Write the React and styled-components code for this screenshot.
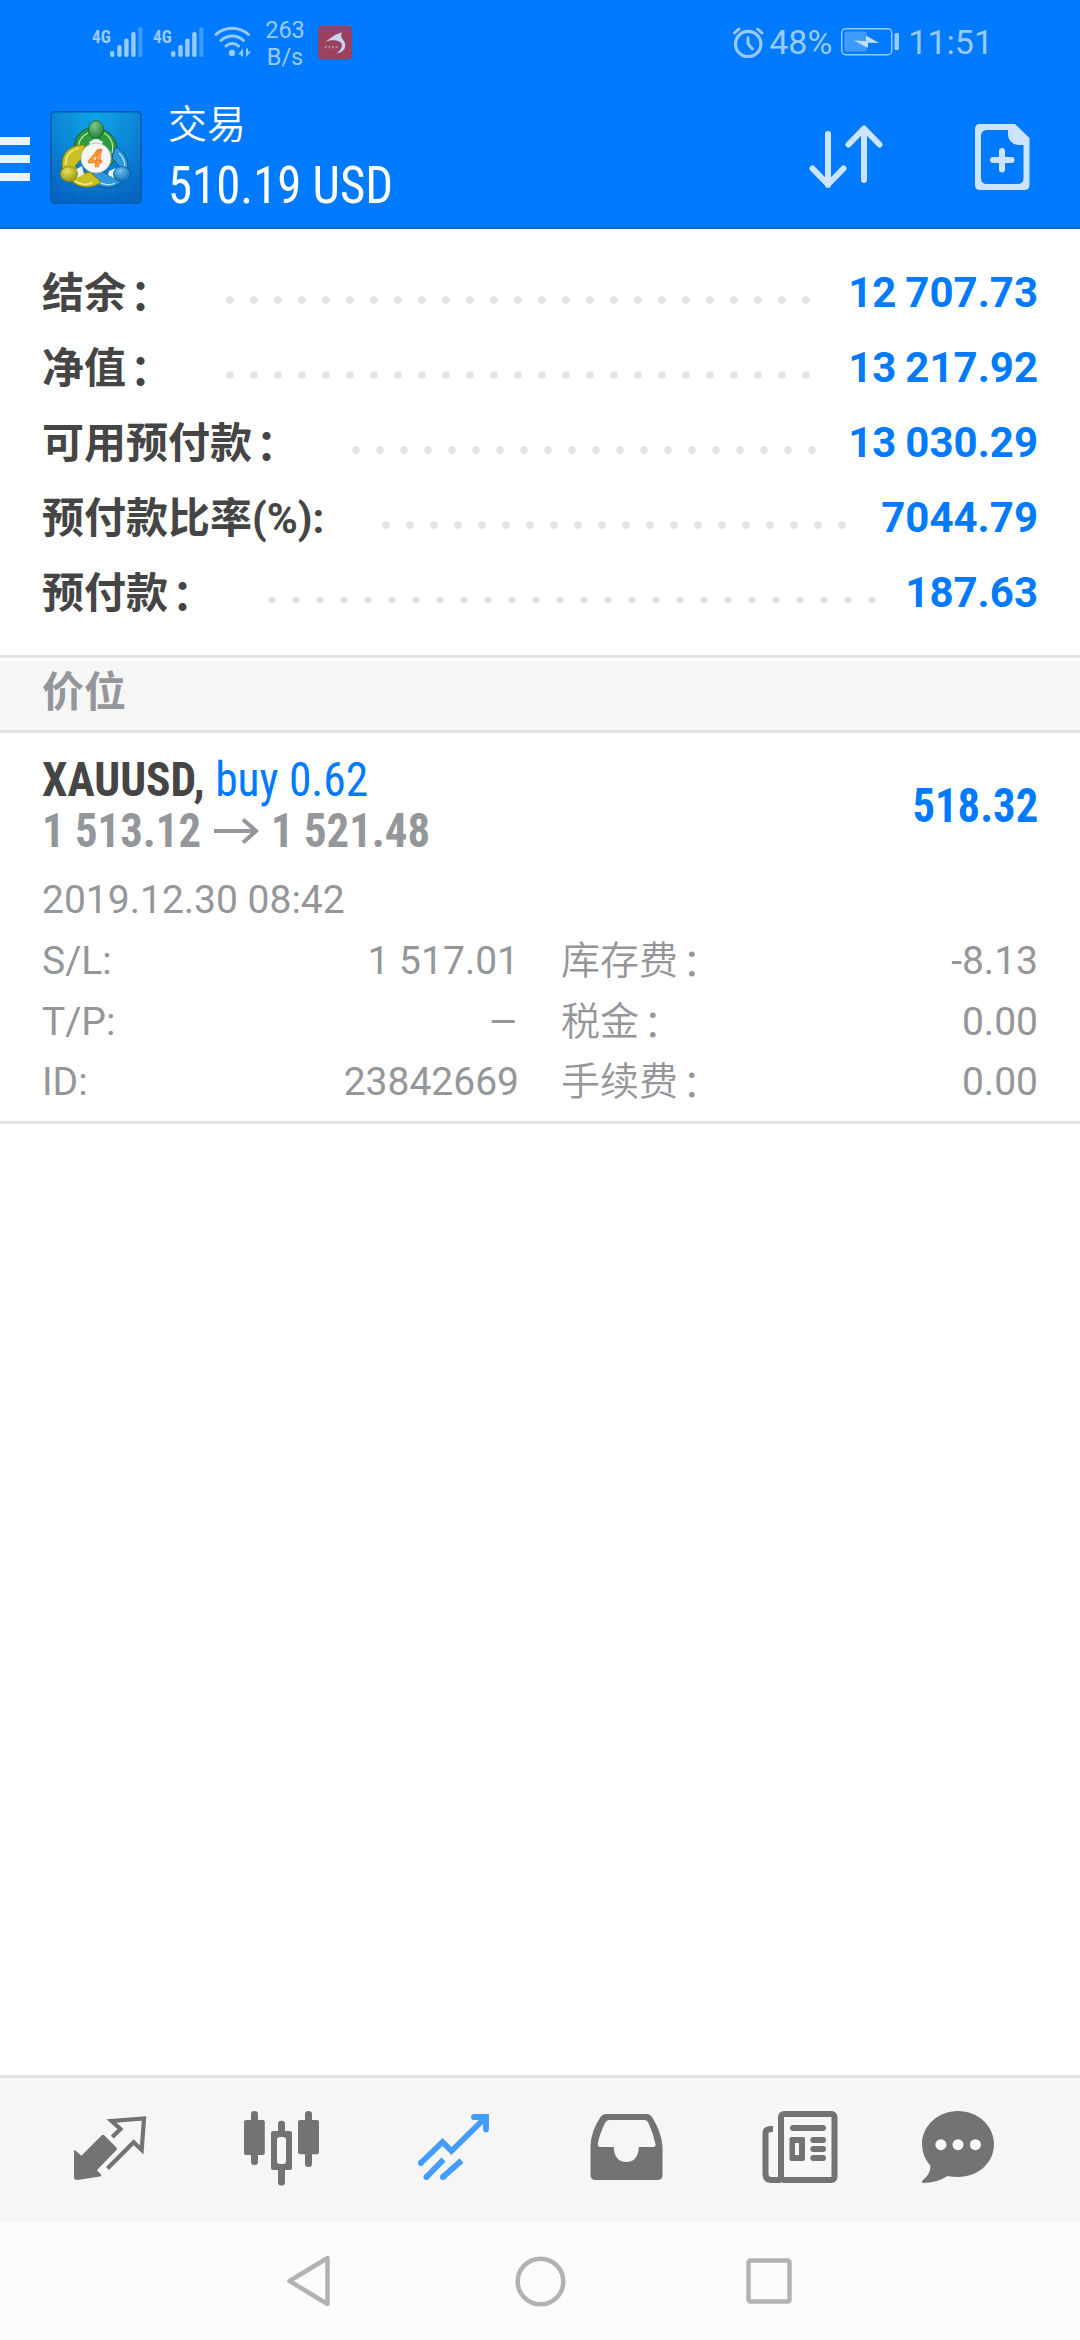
import React from 'react';
import styled, { createGlobalStyle } from 'styled-components';

const balance = [
  { label: '结余', colon: '：', value: '12 707.73', dots: 25 },
  { label: '净值', colon: '：', value: '13 217.92', dots: 25 },
  { label: '可用预付款', colon: '：', value: '13 030.29', dots: 20 },
  { label: '预付款比率(%):', value: '7044.79', dots: 20 },
  { label: '预付款', colon: '：', value: '187.63', dots: 26 },
]

const details = [
  { label: 'S/L:', value: '1 517.01' },
  { label: '库存费', colon: '：', value: '-8.13' },
  { label: 'T/P:', value: '–', empty: true },
  { label: '税金', colon: '：', value: '0.00' },
  { label: 'ID:', value: '23842669' },
  { label: '手续费', colon: '：', value: '0.00' },
]

const GlobalStyle = createGlobalStyle`
  * { box-sizing: border-box; }
  body {
    margin: 0;
    background: #fff;
    font-family: Roboto, "Noto Sans CJK SC", sans-serif;
  }
  svg { display: block; flex: none; }
`;

const Screen = styled.div`
  display: flex;
  flex-direction: column;
  width: 1080px;
  height: 2340px;
  overflow: hidden;
`;

const Header = styled.header`
  height: 229px;
  background: #007aff;
  border-bottom: 2px solid #0b6cd8;
`;

const StatusBar = styled.div`
  display: flex;
  align-items: flex-start;
  height: 86px;
  padding: 22px 87px 0 92px;
  color: #99caff;
`;

const Network = styled.div`
  width: 18px;
  margin-top: 2px;
`;

const Signal = styled.div`
  display: flex;
  align-items: flex-start;
  width: 61px;
  padding-top: 1px;
`;

const Speed = styled.div`
  width: 40px;
  margin-left: 14px;
  font-size: 23.5px;
  line-height: 27px;
  margin-top: -5px;
  text-align: center;
`;

const Badge = styled.div`
  margin: 4px 0 0 13px;
`;

const StatusRight = styled.div`
  display: flex;
  align-items: center;
  margin-left: auto;
  height: 40px;
  font-size: 34px;
  line-height: 40px;
`;

const Charge = styled.span`
  margin: 0 9px 0 5px;
`;

const Clock = styled.span`
  margin-left: 8px;
`;

const AppBar = styled.div`
  display: flex;
  align-items: flex-start;
  height: 141px;
`;

const Menu = styled.div`
  display: flex;
  flex-direction: column;
  gap: 10px;
  width: 30px;
  margin-top: 51px;

  & i { height: 8px; background: #e8f4ff; }
`;

const Logo = styled.div`
  margin: 25px 0 0 20px;
`;

const Titles = styled.div`
  margin-left: 26px;
  color: #fff;
`;

const Title = styled.div`
  margin-top: 15px;
  margin-bottom: 6px;
  font-size: 39px;
  line-height: 48px;
  font-weight: 350;
`;

const Condensed = styled.div`
  width: max-content;
  font-family: "Roboto Condensed", Roboto, sans-serif;
  font-stretch: 75%;
  font-size: ${(p) => p.$size}px;
  line-height: ${(p) => p.$line}px;
  font-weight: ${(p) => p.$weight || 400};
  color: ${(p) => p.$color || 'inherit'};
  transform: scaleX(${(p) => p.$scale || 1});
  transform-origin: ${(p) => p.$origin || 'left'} center;
  white-space: pre;
`;

const Actions = styled.div`
  display: flex;
  gap: 91px;
  margin: 38px 50px 0 auto;
`;

const Summary = styled.section`
  height: 426px;
  padding: 26px 42px 25px;
`;

const SummaryRow = styled.div`
  display: flex;
  height: 75px;
  font-size: 42px;
  line-height: 75px;
  font-weight: 700;
  white-space: nowrap;
`;

const Label = styled.span`
  margin-top: 1px;
  color: #454545;
`;

const Colon = styled.span`
  margin: 0 -4px 0 4px;
  vertical-align: -2px;
`;

const Leader = styled.div`
  width: ${(p) => p.$dots * 24}px;
  height: 8px;
  margin: 41px 0 0 50px;
  background: radial-gradient(circle, #e3e3e3 3.4px, transparent 4.1px) 0 0 / 24px 8px;
`;

const Value = styled.span`
  margin-left: auto;
  color: #007aff;
  word-spacing: -1.5px;
`;

const GroupTitle = styled.div`
  height: 78px;
  padding: 4px 0 7px 42px;
  border-top: 3px solid #e3e3e3;
  border-bottom: 3px solid #e3e3e3;
  background: #f6f6f6;
  box-shadow: inset 0 3px #fff;
  color: #95969a;
  font-size: 42px;
  line-height: 61px;
  font-weight: 700;
`;

const Position = styled.section`
  height: 391px;
  padding: 21px 42px 0;
  border-bottom: 3px solid #e3e3e3;
  color: #95969a;
`;

const PositionTop = styled.div`
  display: flex;
  justify-content: space-between;
  align-items: center;
  height: 102px;

  & b { color: #454545; }
  & span { color: #007aff; }
`;

const PriceLine = styled.div`
  display: flex;
  height: 51px;

  & svg { margin: 13px 0 0; }
`;

const Price = styled.div`
  width: ${(p) => p.$width}px;
`;

const OpenTime = styled.div`
  margin-top: 14px;
  font-size: 39px;
  line-height: 61px;
`;

const Details = styled.div`
  display: grid;
  grid-template-columns: 1fr 1fr;
  column-gap: 42px;
`;

const Detail = styled.div`
  display: flex;
  justify-content: space-between;
  height: 60.5px;
  font-size: 39px;
  line-height: 60.5px;
  white-space: nowrap;
`;

const DetailLabel = styled.span`
  font-weight: ${(p) => (p.$light ? 350 : 400)};
`;

const DetailValue = styled.span`
  transform: ${(p) => (p.$empty ? 'scaleX(1.2)' : 'none')};
  transform-origin: right center;
`;

const TabBar = styled.nav`
  display: flex;
  height: 147px;
  margin-top: auto;
  padding: 33px 0 0 74px;
  border-top: 3px solid #e3e3e3;
  background: #f6f6f6;
  color: #737373;
`;

const Tab = styled.div`
  margin-top: ${(p) => p.$top || 0}px;
  margin-right: ${(p) => p.$gap}px;
  color: ${(p) => (p.$active ? '#459cff' : 'inherit')};
`;

const SystemNav = styled.div`
  display: flex;
  align-items: center;
  height: 118px;
  padding-left: 286px;
  background: #fcfcfc;
  color: #b2b2b2;

  & svg + svg { margin-left: 184px; }
  & svg:last-child { margin-left: 180px; }
`;

const SignalBars = () => (
  <svg width="33" height="34" viewBox="0 0 33 34" fill="currentColor">
    <rect x="0" y="28" width="4.4" height="6" rx="2" />
    <rect x="7.3" y="22" width="4.4" height="12" rx="2" />
    <rect x="14.2" y="15.5" width="4.4" height="18.5" rx="2" />
    <rect x="21.2" y="9" width="4.4" height="25" rx="2" />
    <rect x="28.3" y="4" width="4.2" height="30" rx="2" opacity=".4" />
  </svg>
)

const Wifi = () => (
  <svg width="37" height="36" viewBox="0 -1 37 36" fill="none" stroke="currentColor" strokeWidth="3" strokeLinecap="round">
    <path d="M2 11.5C11 3 25 3 34.5 11.5" />
    <path d="M7 17.5C13.5 11.5 23 11.5 29.5 17.5" />
    <path d="M12 23C15.5 19.5 21 19.5 24.5 23" />
    <circle cx="18" cy="30" r="3.2" fill="currentColor" stroke="none" />
    <path d="M24 31.5L29 25.5V33.5H27V31.5ZM37 28.5L32 34V25.5H34V28.5Z" fill="currentColor" stroke="none" />
  </svg>
)

const DolphinBadge = () => (
  <svg width="34" height="34" viewBox="0 0 34 34">
    <rect width="34" height="34" rx="4.5" fill="#9b4160" />
    <path d="M7.5 15.5C12 13 16 8 24 6.5C22.5 9 23 11 24.5 13C29 18 28 24 22 26.5L18.5 27.5C24.5 23 26 17.5 21 15.5C17 13.5 12 14.5 7.5 15.5Z" fill="#c3d4f5" />
    <path d="M7 21H20" stroke="#b7809d" strokeWidth="2.5" strokeDasharray="2 1.5" />
  </svg>
)

const Alarm = () => (
  <svg width="31" height="32" viewBox="0 0 31 32" fill="none" stroke="currentColor" strokeWidth="3" strokeLinecap="round">
    <circle cx="15.2" cy="18" r="12.7" strokeWidth="3.2" />
    <path d="M15 11.5V18L19.5 23" />
    <path d="M1.5 7L6 3M29 7L24.5 3" />
  </svg>
)

const Battery = () => (
  <svg width="59" height="28" viewBox="0 0 59 28">
    <rect x=".75" y=".75" width="50" height="26" rx="4" fill="none" stroke="#99caff" strokeWidth="1.4" />
    <rect x="3.5" y="3.5" width="22" height="20" rx="1.5" fill="#409bff" />
    <path d="M13 12.5L25 13V7.5L38 15L27 14.8V20Z" fill="#bfddff" />
    <rect x="53.5" y="5" width="4.5" height="17" rx="1.5" fill="#99caff" />
  </svg>
)

const AppLogo = () => (
  <svg width="92" height="93" viewBox="0 0 92 93">
    <defs>
      <radialGradient id="tile" cx=".5" cy=".05" r=".95">
        <stop offset="0" stopColor="#0fa4e8" />
        <stop offset="1" stopColor="#0565c2" />
      </radialGradient>
      <radialGradient id="green" cx=".4" cy=".3" r=".8">
        <stop offset="0" stopColor="#7cc98a" />
        <stop offset="1" stopColor="#17762f" />
      </radialGradient>
      <radialGradient id="yellow" cx=".4" cy=".3" r=".8">
        <stop offset="0" stopColor="#e6e05a" />
        <stop offset="1" stopColor="#968f0c" />
      </radialGradient>
      <radialGradient id="blue" cx=".4" cy=".3" r=".8">
        <stop offset="0" stopColor="#69c4f2" />
        <stop offset="1" stopColor="#0a62ad" />
      </radialGradient>
    </defs>
    <rect x=".8" y=".8" width="90.4" height="91.2" rx="4" fill="url(#tile)" stroke="#0758ae" strokeWidth="1.6" />
    <path d="M14 1V92M30 1V92M46 1V92M62 1V92M78 1V92M1 15H91M1 31H91M1 47H91M1 63H91M1 79H91" stroke="#fff" strokeOpacity=".05" />
    <path d="M40 17C27 20 22 31 26 43L34 47L41 30H51L60 54C68 48 70 32 61 24C57 20 53 18 50 17Z" fill="#2f9a3c" stroke="#105c22" />
    <path d="M38 22C30 26 28 32 29 38M54 22C62 27 64 34 62 42" fill="none" stroke="#b9e7a9" strokeWidth="1.2" />
    <path d="M65 36C76 40 81 53 76 65C72 74 58 80 48 74C43 71 40 67 38 62L54 61L62 66L70 56L62 47Z" fill="#2f97da" stroke="#0a569c" />
    <path d="M69 42C75 48 77 57 72 65M46 68C51 74 60 75 65 72" fill="none" stroke="#b4e4ff" strokeWidth="1.2" />
    <path d="M35 34C19 33 9 44 13 60L21 69C28 78 43 78 51 71L40 61L30 63L25 55L33 46Z" fill="#c9c022" stroke="#827c0a" />
    <path d="M29 37C19 40 15 46 16 54M25 70C32 75 38 74 43 71" fill="none" stroke="#f8f4a5" strokeWidth="1.2" />
    <path d="M39 31L46 27L53 31L51 36H41ZM25 59L32 55L34 63L27 67ZM59 60L66 57L64 67L58 64Z" fill="#eaf3ee" />
    <ellipse cx="46" cy="18.5" rx="7.5" ry="9" fill="url(#green)" stroke="#12682b" strokeWidth=".8" />
    <ellipse cx="19" cy="63" rx="8.5" ry="7.5" fill="url(#yellow)" stroke="#8a840d" strokeWidth=".8" />
    <ellipse cx="72" cy="63" rx="8.5" ry="7.5" fill="url(#blue)" stroke="#0b5ba3" strokeWidth=".8" />
    <circle cx="46" cy="47" r="15" fill="#f7f6f5" stroke="#b9c4c0" />
    <text x="45.5" y="56" textAnchor="middle" fontFamily="Roboto, sans-serif" fontStyle="italic" fontWeight="700" fontSize="26" fill="#ffa23d" stroke="#e57522" strokeWidth=".7">4</text>
  </svg>
)

const SortIcon = () => (
  <svg width="75" height="66" viewBox="0 0 75 66" fill="none" stroke="#cce4ff" strokeWidth="6" strokeLinecap="round" strokeLinejoin="round">
    <path d="M19 10V61M3.5 44.5L19 60.5L34.5 44.5" />
    <path d="M55 56V5M39.5 20.5L55 4.5L70.5 20.5" />
  </svg>
)

const NewOrderIcon = () => (
  <svg width="55" height="67" viewBox="0 0 55 67">
    <path fillRule="evenodd" fill="#cce4ff" d="M5 0H40L54.5 14V61Q54.5 66 49.5 66H5Q0 66 0 61V5Q0 0 5 0ZM12 6Q6 6 6 12V54Q6 60 12 60H42.5Q48.5 60 48.5 54V21H44Q33 20 33 10V6Z" />
    <path d="M27 27V45.5M18 36H36.5" stroke="#cce4ff" strokeWidth="6" strokeLinecap="round" />
  </svg>
)

const QuotesIcon = () => (
  <svg width="73" height="66" viewBox="0 0 73 66">
    <path d="M0 34.5Q1 34 2 35L7.3 39.7L27.5 19.5Q29 18 30.5 19.5L42.5 31.5Q43.5 33 42.5 34L22.8 54.3L27 58.5Q28 60 26 60.5L3 64Q0 64 0 61Z" fill="currentColor" />
    <path d="M38.3 21L46.5 13L37.5 5L70 2.5L67.7 34L59.6 26.3L33.5 52.5" fill="none" stroke="currentColor" strokeWidth="4.2" />
  </svg>
)

const ChartIcon = () => (
  <svg width="75" height="75" viewBox="0 0 75 75" fill="currentColor">
    <rect x="7" y="0" width="7" height="54" rx="3.3" />
    <rect x="0" y="9" width="20.8" height="35" rx="2" />
    <rect x="61" y="0" width="7" height="56" rx="3.3" />
    <rect x="54" y="9" width="21" height="34.3" rx="2" />
    <rect x="34" y="9.7" width="7" height="14" rx="3.3" />
    <rect x="34" y="56" width="7" height="18.5" rx="3" />
    <path fillRule="evenodd" d="M29 20H46Q48 20 48 22V57Q48 59 46 59H29Q27 59 27 57V22Q27 20 29 20ZM36 26Q33 26 33 29V50Q33 53 36 53H39Q42 53 42 50V29Q42 26 39 26Z" />
  </svg>
)

const TradeIcon = () => (
  <svg width="72" height="67" viewBox="0 0 72 67" fill="none" stroke="currentColor" strokeWidth="5.8">
    <path d="M2.8 49L24.5 28L33.5 37L67 4" />
    <path d="M56 3H68V15.5" strokeLinecap="round" />
    <path d="M8.5 63L25.5 45.5M25 63L43.5 46.5" />
    <g fill="currentColor" stroke="none">
      <circle cx="2.9" cy="49" r="2.9" />
      <circle cx="8.5" cy="63" r="3" />
      <circle cx="25" cy="63" r="3" />
      <path d="M60 0H69Q71 0 71 2V10Z" />
    </g>
  </svg>
)

const HistoryIcon = () => (
  <svg width="73" height="66" viewBox="0 0 73 66">
    <path fillRule="evenodd" fill="currentColor" d="M15.5 0H57Q60 0 62 3Q71 17 72.5 32V61Q72.5 66 67.5 66H5.5Q.5 66 .5 61V32Q1 17 10.5 3Q12.5 0 15.5 0ZM19.5 6Q16.5 6 15 9Q9.5 20 7.8 30Q7.5 33 10.5 33H23.7Q24.5 48 36.2 48Q48 48 48.8 33H63Q66 33 65.5 30Q63 19 58.5 9Q57 6 54 6Z" />
  </svg>
)

const NewsIcon = () => (
  <svg width="76" height="72" viewBox="0 0 76 72">
    <g fill="none" stroke="currentColor" strokeWidth="6">
      <rect x="19" y="3" width="53.5" height="66" rx="3" />
      <path d="M11 18Q3.5 17.5 3.5 22V63Q3.5 69 9.5 69H19" />
    </g>
    <g fill="currentColor">
      <rect x="28" y="14" width="36" height="6" rx="3" />
      <path fillRule="evenodd" d="M29.5 26H41Q43 26 43 28V48Q43 50 41 50H29.5Q27.5 50 27.5 48V28Q27.5 26 29.5 26ZM33 32V44H37V32Z" />
      <rect x="48.3" y="26" width="15.7" height="6" rx="3" />
      <rect x="48.3" y="35" width="15.7" height="6" rx="3" />
      <rect x="48.3" y="44" width="15.7" height="6" rx="3" />
    </g>
  </svg>
)

const ChatIcon = () => (
  <svg width="73" height="72" viewBox="0 0 73 72">
    <path fill="currentColor" d="M36 0C56 0 72 15 72 33C72 52 56 66 36 66Q30 66 25.5 65Q15 72 1 72Q-1 71 1 69Q8.5 63 8.5 55Q0 45 0 33C0 15 16 0 36 0Z" />
    <g fill="#fcfcfc">
      <circle cx="18.9" cy="33.7" r="5.5" />
      <circle cx="36" cy="33.7" r="5.5" />
      <circle cx="53.4" cy="33.7" r="5.5" />
    </g>
  </svg>
)

const App = () => (
  <Screen>
    <GlobalStyle />
    <Header>
      <StatusBar>
        <Signal>
          <Network><Condensed $size={19} $line={24} $weight={700} $scale={0.9}>4G</Condensed></Network>
          <SignalBars />
        </Signal>
        <Signal>
          <Network><Condensed $size={19} $line={24} $weight={700} $scale={0.9}>4G</Condensed></Network>
          <SignalBars />
        </Signal>
        <Wifi />
        <Speed>263 B/s</Speed>
        <Badge><DolphinBadge /></Badge>
        <StatusRight>
          <Alarm />
          <Charge>48%</Charge>
          <Battery />
          <Clock>11:51</Clock>
        </StatusRight>
      </StatusBar>
      <AppBar>
        <Menu><i /><i /><i /></Menu>
        <Logo><AppLogo /></Logo>
        <Titles>
          <Title>交易</Title>
          <Condensed $size={51} $line={62} $scale={0.957}>510.19 USD</Condensed>
        </Titles>
        <Actions>
          <SortIcon />
          <NewOrderIcon />
        </Actions>
      </AppBar>
    </Header>

    <Summary>
      {balance.map((row) => (
        <SummaryRow key={row.label}>
          <Label>{row.label}{row.colon && <Colon>{row.colon}</Colon>}</Label>
          <Leader $dots={row.dots} />
          <Value>{row.value}</Value>
        </SummaryRow>
      ))}
    </Summary>

    <GroupTitle>价位</GroupTitle>

    <Position>
      <PositionTop>
        <div>
          <Condensed $size={48} $line={51} $scale={0.947}><b>XAUUSD,</b> <span>buy 0.62</span></Condensed>
          <PriceLine>
            <Price $width={172}><Condensed $size={48} $line={51} $weight={700} $scale={0.933}>1 513.12</Condensed></Price>
            <svg width="57" height="26" viewBox="0 0 57 26" fill="none" stroke="currentColor" strokeWidth="4">
              <path d="M0 13H43M29 1.5L42 13L29 24.5" />
            </svg>
            <Condensed $size={48} $line={51} $weight={700} $scale={0.933}>1 521.48</Condensed>
          </PriceLine>
        </div>
        <Condensed $size={48} $line={51} $weight={700} $scale={0.93} $origin="right" $color="#007aff">518.32</Condensed>
      </PositionTop>
      <OpenTime>2019.12.30 08:42</OpenTime>
      <Details>
        {details.map((item) => (
          <Detail key={item.label}>
            <DetailLabel $light={!!item.colon}>{item.label}{item.colon && <Colon>{item.colon}</Colon>}</DetailLabel>
            <DetailValue $empty={item.empty}>{item.value}</DetailValue>
          </Detail>
        ))}
      </Details>
    </Position>

    <TabBar>
      <Tab $top={5} $gap={97}><QuotesIcon /></Tab>
      <Tab $gap={99}><ChartIcon /></Tab>
      <Tab $top={3} $gap={100} $active><TradeIcon /></Tab>
      <Tab $top={3} $gap={99}><HistoryIcon /></Tab>
      <Tab $gap={84}><NewsIcon /></Tab>
      <Tab $gap={0}><ChatIcon /></Tab>
    </TabBar>

    <SystemNav>
      <svg width="45" height="52" viewBox="0 0 45 52" fill="none" stroke="currentColor" strokeWidth="4.5" strokeLinejoin="round">
        <path d="M3.5 26L41.5 3V49Z" />
      </svg>
      <svg width="51" height="51" viewBox="0 0 51 51" fill="none" stroke="currentColor" strokeWidth="4.5">
        <circle cx="25.5" cy="25.5" r="22.8" />
      </svg>
      <svg width="46" height="46" viewBox="0 0 46 46" fill="none" stroke="currentColor" strokeWidth="4.5">
        <rect x="2.5" y="2.5" width="41" height="41" rx="2" />
      </svg>
    </SystemNav>
  </Screen>
)

export default App;
